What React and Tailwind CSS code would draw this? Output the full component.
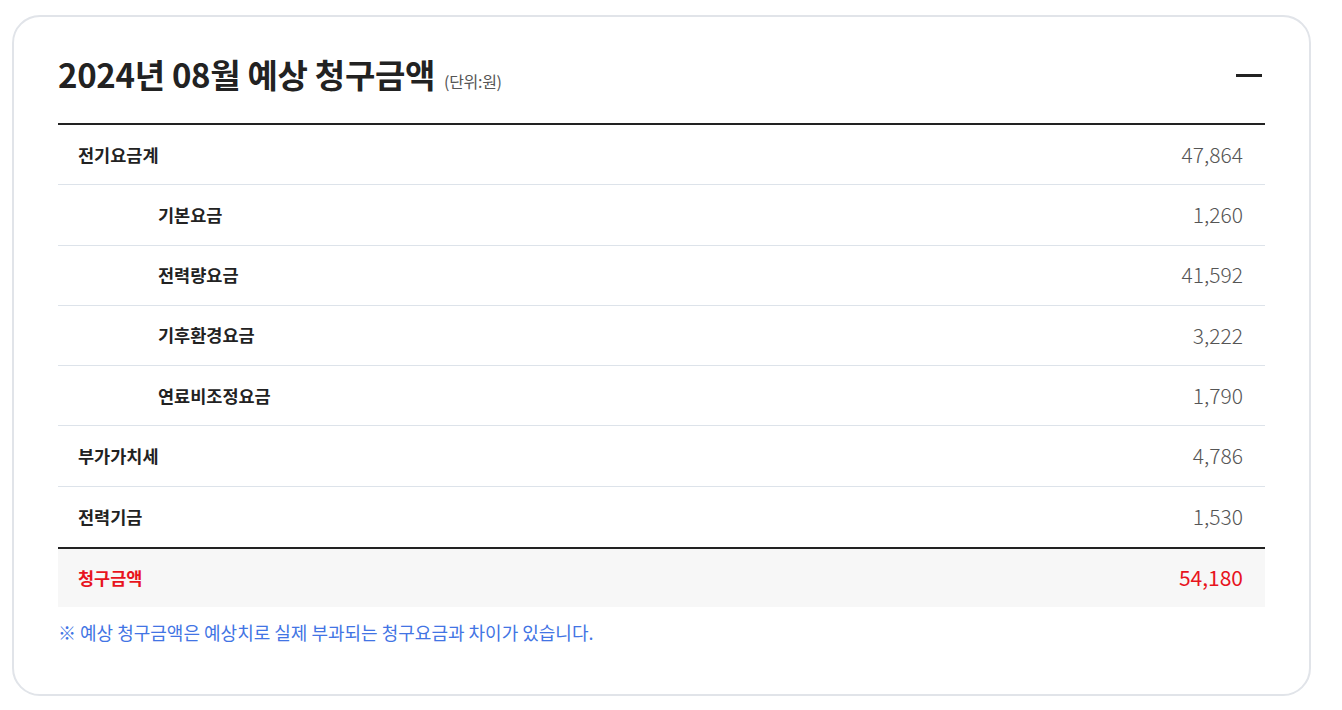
import React from "react";

const rows = [
  { label: "전기요금계", value: "47,864" },
  { label: "기본요금", value: "1,260", sub: true },
  { label: "전력량요금", value: "41,592", sub: true },
  { label: "기후환경요금", value: "3,222", sub: true },
  { label: "연료비조정요금", value: "1,790", sub: true },
  { label: "부가가치세", value: "4,786" },
  { label: "전력기금", value: "1,530" },
];

const App = () => {
  return (
    <div
      className="min-h-[710px] bg-white pl-[12px] pt-[15px] flex"
      style={{ fontFamily: '"Noto Sans CJK KR", "Noto Sans", sans-serif' }}
    >
      <div className="w-[1299px] h-[681px] border-2 border-[#e1e4e9] rounded-[28px] bg-white px-[44px] pt-[34px]">
        <div className="flex items-center justify-between h-[48px]">
          <h2 className="flex items-baseline text-[33px] font-bold text-[#222] tracking-[-0.3px]">
            2024년 08월 예상 청구금액
            <span className="ml-[9px] text-[16px] font-normal text-[#555]">(단위:원)</span>
          </h2>
          <button className="w-[26px] h-[3px] bg-[#222] mr-[3px]" aria-label="접기"></button>
        </div>

        <div className="mt-[24px] border-t-2 border-[#222]">
          {rows.map((row, i) => (
            <div
              key={row.label}
              className={`flex items-center justify-between h-[60.3px] pl-[20px] pr-[22px] ${
                i < rows.length - 1 ? "border-b border-[#dde3ea]" : ""
              }`}
            >
              <span
                className={`text-[17.5px] font-bold text-[#222] ${row.sub ? "pl-[80px]" : ""}`}
              >
                {row.label}
              </span>
              <span className="text-[21px] font-light text-[#555]">{row.value}</span>
            </div>
          ))}
          <div className="flex items-center justify-between h-[60px] pl-[20px] pr-[22px] border-t-2 border-[#222] bg-[#f7f7f7]">
            <span className="text-[17.5px] font-bold text-[#e8141e]">청구금액</span>
            <span className="text-[21px] text-[#e8141e]">54,180</span>
          </div>
        </div>

        <p className="mt-[12px] text-[18px] text-[#4274e4]">
          ※ 예상 청구금액은 예상치로 실제 부과되는 청구요금과 차이가 있습니다.
        </p>
      </div>
    </div>
  );
};

export default App;
